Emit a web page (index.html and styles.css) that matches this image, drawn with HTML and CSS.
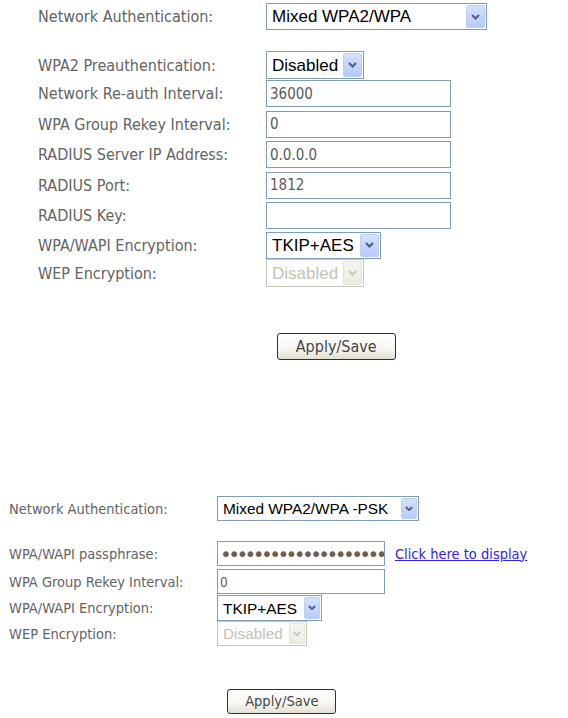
FILE: index.html
```html
<!DOCTYPE html>
<html>
<head>
<meta charset="utf-8">
<title>Wireless Security</title>
<link rel="stylesheet" href="styles.css">
</head>
<body>
<div class="panel panel-a">
  <div class="row first">
    <span class="lbl">Network Authentication:</span>
    <span class="combo w-auth"><select><option>Mixed WPA2/WPA</option></select><span class="arrow"><svg viewBox="0 0 9 6"><polyline points="1,1 4.5,4.5 8,1"/></svg></span></span>
  </div>
  <div class="row gap-above">
    <span class="lbl">WPA2 Preauthentication:</span>
    <span class="combo w-dis tall"><select><option>Disabled</option></select><span class="arrow"><svg viewBox="0 0 9 6"><polyline points="1,1 4.5,4.5 8,1"/></svg></span></span>
  </div>
  <div class="row in-row">
    <span class="lbl">Network Re-auth Interval:</span>
    <input class="field" type="text" value="36000">
  </div>
  <div class="row in-row">
    <span class="lbl">WPA Group Rekey Interval:</span>
    <input class="field" type="text" value="0">
  </div>
  <div class="row in-row">
    <span class="lbl">RADIUS Server IP Address:</span>
    <input class="field" type="text" value="0.0.0.0">
  </div>
  <div class="row in-row">
    <span class="lbl">RADIUS Port:</span>
    <input class="field" type="text" value="1812">
  </div>
  <div class="row in-row">
    <span class="lbl">RADIUS Key:</span>
    <input class="field" type="text" value="">
  </div>
  <div class="row">
    <span class="lbl">WPA/WAPI Encryption:</span>
    <span class="combo w-tkip mid"><select><option>TKIP+AES</option></select><span class="arrow"><svg viewBox="0 0 9 6"><polyline points="1,1 4.5,4.5 8,1"/></svg></span></span>
  </div>
  <div class="row">
    <span class="lbl">WEP Encryption:</span>
    <span class="combo w-dis tall disabled"><select disabled><option>Disabled</option></select><span class="arrow"><svg viewBox="0 0 9 6"><polyline points="1,1 4.5,4.5 8,1"/></svg></span></span>
  </div>
  <div class="actions">
    <button class="btn" type="button">Apply/Save</button>
  </div>
</div>

<div class="panel panel-b">
  <div class="row">
    <span class="lbl">Network Authentication:</span>
    <span class="combo w-auth"><select><option>Mixed WPA2/WPA -PSK</option></select><span class="arrow"><svg viewBox="0 0 9 6"><polyline points="1,1 4.5,4.5 8,1"/></svg></span></span>
  </div>
  <div class="row gap-above">
    <span class="lbl">WPA/WAPI passphrase:</span>
    <input class="field pass" type="password" value="abcdefghijklmnopqrstuvwxyz">
    <a class="link" href="#">Click here to display</a>
  </div>
  <div class="row in-row">
    <span class="lbl">WPA Group Rekey Interval:</span>
    <input class="field" type="text" value="0">
  </div>
  <div class="row">
    <span class="lbl">WPA/WAPI Encryption:</span>
    <span class="combo w-tkip"><select><option>TKIP+AES</option></select><span class="arrow"><svg viewBox="0 0 9 6"><polyline points="1,1 4.5,4.5 8,1"/></svg></span></span>
  </div>
  <div class="row">
    <span class="lbl">WEP Encryption:</span>
    <span class="combo w-dis disabled"><select disabled><option>Disabled</option></select><span class="arrow"><svg viewBox="0 0 9 6"><polyline points="1,1 4.5,4.5 8,1"/></svg></span></span>
  </div>
  <div class="actions">
    <button class="btn" type="button">Apply/Save</button>
  </div>
</div>
</body>
</html>
```

FILE: styles.css
```css
html, body {
  margin: 0;
  padding: 0;
  background: #ffffff;
}

body {
  font-family: "DejaVu Sans Condensed", "DejaVu Sans", sans-serif;
  font-stretch: condensed;
}

.panel {
  display: flex;
  flex-direction: column;
  align-items: flex-start;
}

.row {
  display: flex;
  align-items: center;
}

.lbl {
  flex: none;
  color: #636363;
  white-space: nowrap;
}

/* combo box (XP style select) */
.combo {
  display: inline-flex;
  align-items: stretch;
  box-sizing: border-box;
  border: 1px solid #7f9db9;
  background: #ffffff;
  padding: 1px;
}

.combo select {
  appearance: none;
  -webkit-appearance: none;
  flex: 1;
  min-width: 0;
  border: 0;
  margin: 0;
  padding: 0 0 0 4px;
  background: transparent;
  color: #000000;
  font-family: "Liberation Sans", Arial, sans-serif;
  outline: none;
}

.arrow {
  flex: none;
  box-sizing: border-box;
  border: 1px solid #bccdf6;
  border-radius: 2px;
  background: linear-gradient(#d4e1fd, #b7cbfb);
  display: flex;
  align-items: center;
  justify-content: center;
}

.arrow svg {
  fill: none;
  stroke: #4d6185;
  stroke-width: 2.2;
}

.combo.disabled {
  border-color: #c9c7ba;
  background: #ffffff;
}

.combo.disabled select {
  color: #aca899;
}

.combo.disabled .arrow {
  border-color: #e6e4da;
  background: linear-gradient(#f6f5f0, #eceae1);
}

.combo.disabled .arrow svg {
  stroke: #c9c7ba;
}

/* text fields */
.field {
  box-sizing: border-box;
  border: 1px solid #7f9db9;
  margin: 0;
  background: #ffffff;
  color: #5a5a5a;
  font-family: "DejaVu Sans Condensed", "DejaVu Sans", sans-serif;
  font-stretch: condensed;
  outline: none;
}

.link {
  color: #2f23f0;
  text-decoration: underline;
  white-space: nowrap;
}

.btn {
  box-sizing: border-box;
  border: 1px solid #003c74;
  border-radius: 3px;
  background: linear-gradient(#ffffff 0%, #f6f5f0 60%, #e3e0d2 100%);
  color: #454545;
  font-family: "DejaVu Sans Condensed", "DejaVu Sans", sans-serif;
  font-stretch: condensed;
  padding: 0;
  margin: 0;
}

/* ---------- upper panel ---------- */
.panel-a {
  padding: 3px 0 0 38px;
  font-size: 16px;
}

.panel-a .lbl {
  width: 228px;
}

.panel-a .combo {
  height: 27px;
}

.panel-a .combo.tall {
  height: 28px;
}

.panel-a .combo.mid {
  height: 27.5px;
}

.panel-a .combo select {
  font-size: 17px;
}

.panel-a .arrow {
  width: 19px;
}

.panel-a .arrow svg {
  width: 9px;
  height: 6px;
}

.panel-a .gap-above {
  margin-top: 21px;
}

.panel-a .w-auth { width: 221px; }
.panel-a .w-dis { width: 98px; }
.panel-a .w-tkip { width: 115px; }

.panel-a .in-row {
  padding: 1px 0 2.5px;
}

.panel-a .field {
  width: 185px;
  height: 27px;
  padding: 0 0 0 3px;
  font-size: 15px;
}

.panel-a .actions {
  margin: 46px 0 0 238.7px;
}

.panel-a .btn {
  width: 119px;
  height: 26.5px;
  font-size: 16px;
}

/* ---------- lower panel ---------- */
.panel-b {
  margin-top: 136.3px;
  padding-left: 9px;
  font-size: 14.5px;
}

.panel-b .lbl {
  width: 208px;
}

.panel-b .combo {
  height: 25.5px;
}

.panel-b .combo select {
  font-size: 15.4px;
}

.panel-b .arrow {
  width: 16px;
}

.panel-b .arrow svg {
  width: 8px;
  height: 5.5px;
}

.panel-b .w-auth { width: 202px; }
.panel-b .w-tkip { width: 105px; margin-top: 1px; }
.panel-b .w-dis { width: 90px; }

.panel-b .gap-above {
  margin-top: 19.7px;
}

.panel-b .in-row {
  padding-top: 2.7px;
}

.panel-b .field {
  width: 168px;
  height: 25.3px;
  padding: 0 0 0 2px;
  font-size: 13.5px;
}

.panel-b .field.pass {
  color: #6b5f52;
  font-family: "DejaVu Sans", sans-serif;
  font-stretch: normal;
  font-size: 20px;
  letter-spacing: -3.6px;
  padding-left: 2px;
}

.panel-b .link {
  margin-left: 10px;
  font-size: 14.5px;
}

.panel-b .actions {
  margin: 42.7px 0 0 218.3px;
}

.panel-b .btn {
  width: 109px;
  height: 24.6px;
  font-size: 14.5px;
}
```
